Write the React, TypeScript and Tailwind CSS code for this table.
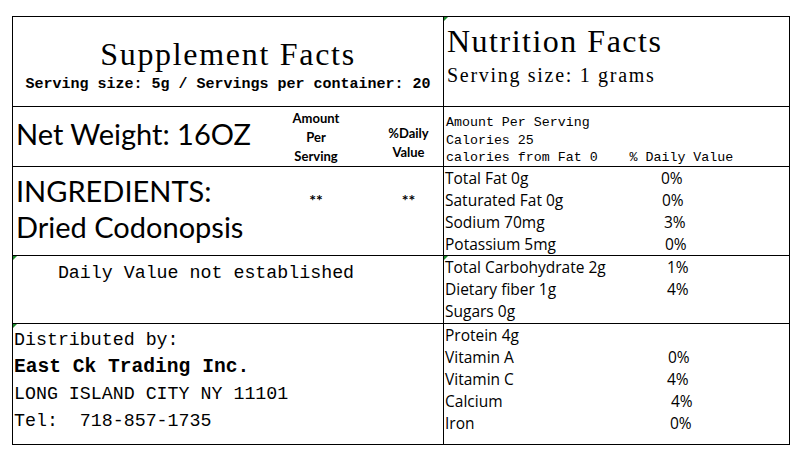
import React from 'react';

const serif = "font-['Liberation_Serif',serif]";
const mono = "font-['Liberation_Mono',monospace]";
const sans = "font-['Lato',sans-serif]";
const body = "font-['Open_Sans',sans-serif]";

interface Row {
    label: string;
    pct?: string;
    labelWidth: string;
}

const fatRows: Row[] = [
    { label: 'Total Fat 0g', pct: '0%', labelWidth: 'w-[216px]' },
    { label: 'Saturated Fat 0g', pct: '0%', labelWidth: 'w-[217px]' },
    { label: 'Sodium 70mg', pct: '3%', labelWidth: 'w-[219px]' },
    { label: 'Potassium 5mg', pct: '0%', labelWidth: 'w-[220px]' }
];

const carbRows: Row[] = [
    { label: 'Total Carbohydrate 2g', pct: '1%', labelWidth: 'w-[222px]' },
    { label: 'Dietary fiber 1g', pct: '4%', labelWidth: 'w-[222px]' },
    { label: 'Sugars 0g', labelWidth: 'w-[222px]' }
];

const vitaminRows: Row[] = [
    { label: 'Protein 4g', labelWidth: 'w-[222px]' },
    { label: 'Vitamin A', pct: '0%', labelWidth: 'w-[223px]' },
    { label: 'Vitamin C', pct: '4%', labelWidth: 'w-[222px]' },
    { label: 'Calcium', pct: '4%', labelWidth: 'w-[226px]' },
    { label: 'Iron', pct: '0%', labelWidth: 'w-[225px]' }
];

const Marker = () => (
    <span className="absolute left-0 top-0 w-0 h-0 border-t-[4px] border-r-[4px] border-t-[#1f8a2e] border-r-transparent"></span>
);

const NutrientList: React.FC<{ rows: Row[] }> = ({ rows }) => (
    <div className={`${body} text-[15.5px] leading-[22px] text-black pl-[1px]`}>
        {rows.map((row) => (
            <div key={row.label} className="flex whitespace-nowrap">
                <span className={row.labelWidth}>{row.label}</span>
                {row.pct && <span>{row.pct}</span>}
            </div>
        ))}
    </div>
);

export default function App() {
    return (
        <div className="w-[807px] h-[467px] bg-white pt-[16px] pl-[12px] text-black">
            <div className="grid w-max grid-cols-[431px_346px] grid-rows-[90px_60px_89px_68px_121px] border-l border-t border-black">
                {/* row 1 */}
                <div className="border-r border-b border-black pt-[21px] text-center">
                    <div className={`${serif} text-[32px] leading-[32px] tracking-[1.7px]`}>Supplement Facts</div>
                    <div className={`${mono} mt-[6px] text-[15px] leading-[18px] font-bold whitespace-pre`}>
                        Serving size: 5g / Servings per container: 20
                    </div>
                </div>
                <div className="relative border-r border-b border-black pt-[8px] pl-[3px]">
                    <Marker />
                    <div className={`${serif} text-[32px] leading-[32px] tracking-[1.5px]`}>Nutrition Facts</div>
                    <div className={`${serif} mt-[8px] text-[20px] leading-[20px] tracking-[1.7px]`}>Serving size: 1 grams</div>
                </div>

                {/* row 2 */}
                <div className={`grid grid-cols-[245px_116px_69px] border-r border-b border-black ${sans}`}>
                    <div className="pt-[9px] pl-[3px] text-[29px] leading-[36px] whitespace-nowrap">Net Weight: 16OZ</div>
                    <div className="pt-[2px] text-center text-[13px] leading-[19px] font-bold">
                        <div>Amount</div>
                        <div>Per</div>
                        <div>Serving</div>
                    </div>
                    <div className="pt-[17px] text-center text-[13px] leading-[19px] font-bold">
                        <div>%Daily</div>
                        <div>Value</div>
                    </div>
                </div>
                <div className={`border-r border-b border-black pt-[7px] pl-[2px] ${mono} text-[13.3px] leading-[17.5px] whitespace-pre`}>
                    <div>Amount Per Serving</div>
                    <div>Calories 25</div>
                    <div>calories from Fat 0    % Daily Value</div>
                </div>

                {/* row 3 */}
                <div className={`grid grid-cols-[245px_116px_69px] border-r border-b border-black ${sans}`}>
                    <div className="pt-[6px] pl-[3px] text-[29px] leading-[36px] whitespace-nowrap">
                        <div>INGREDIENTS:</div>
                        <div>Dried Codonopsis</div>
                    </div>
                    <div className="pt-[23px] text-center text-[16px] leading-[19px] font-bold">**</div>
                    <div className="pt-[23px] text-center text-[16px] leading-[19px] font-bold">**</div>
                </div>
                <div className="border-r border-b border-black">
                    <NutrientList rows={fatRows} />
                </div>

                {/* row 4 */}
                <div className={`relative border-r border-b border-black pt-[6px] pl-[1px] ${mono} text-[18.3px] leading-[22px] whitespace-pre`}>
                    <Marker />
                    <div>    Daily Value not established</div>
                </div>
                <div className="relative border-r border-b border-black">
                    <Marker />
                    <NutrientList rows={carbRows} />
                </div>

                {/* row 5 */}
                <div className={`relative border-r border-b border-black pt-[3px] pl-[1px] ${mono} text-[18.3px] leading-[27px] whitespace-pre`}>
                    <Marker />
                    <div>Distributed by:</div>
                    <div className="text-[19.6px] font-bold">East Ck Trading Inc.</div>
                    <div>LONG ISLAND CITY NY 11101</div>
                    <div>Tel:  718-857-1735</div>
                </div>
                <div className="border-r border-b border-black">
                    <NutrientList rows={vitaminRows} />
                </div>
            </div>
        </div>
    );
}
